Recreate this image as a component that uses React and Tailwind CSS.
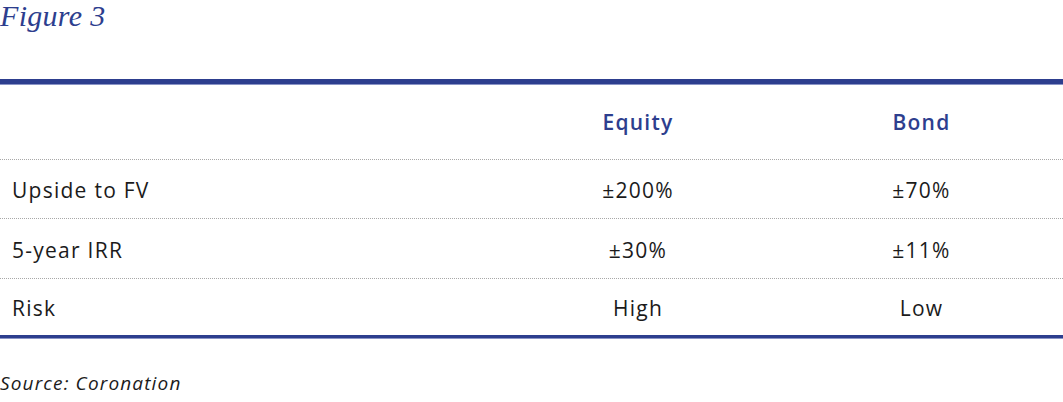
const rows = [
  { label: "Upside to FV", equity: "±200%", bond: "±70%", h: "h-[59px]" },
  { label: "5-year IRR", equity: "±30%", bond: "±11%", h: "h-[60px]" },
  { label: "Risk", equity: "High", bond: "Low", h: "h-[57px]" },
];

export default function App() {
  return (
    <div className="w-[1063px] h-[402px] bg-white text-[#1b1b1b] font-['Open_Sans',sans-serif] overflow-hidden">
      <h1 className="h-[79px] font-['Liberation_Serif',serif] italic text-[30px] leading-[32px] tracking-[0.01em] text-[#2d3e8e]">
        Figure 3
      </h1>

      <div className="border-t-[5px] border-[#2d3e8e]" />
      <div className="h-px bg-[#8a94c6]" />

      <div className="grid grid-cols-[496px_284px_283px] h-[74px] items-center text-[21px] tracking-[0.06em] font-semibold text-[#2d3e8e] pt-[2px]">
        <div />
        <div className="text-center">Equity</div>
        <div className="text-center">Bond</div>
      </div>

      {rows.map((row, i) => (
        <div
          key={i}
          className={`grid grid-cols-[496px_284px_283px] items-center text-[21px] tracking-[0.06em] border-t border-dotted border-[#a8a8a8] pt-[4px] ${row.h}`}
        >
          <div className="pl-[12px]">{row.label}</div>
          <div className="text-center">{row.equity}</div>
          <div className="text-center">{row.bond}</div>
        </div>
      ))}

      <div className="border-t-[3px] border-[#2d3e8e]" />
      <div className="h-px bg-[#8a94c6]" />

      <p className="mt-[32px] italic text-[19px] leading-[24px] tracking-[0.06em]">Source: Coronation</p>
    </div>
  );
}
